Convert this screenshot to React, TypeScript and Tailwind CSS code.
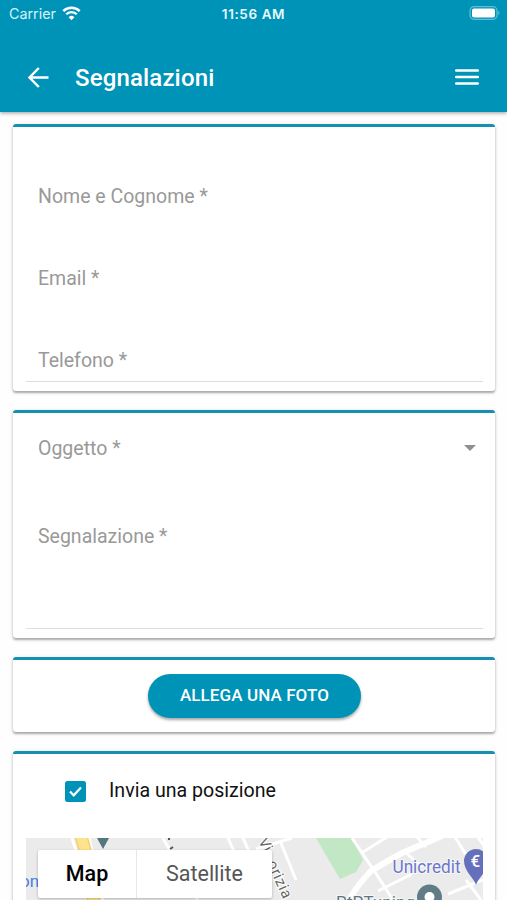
import { ReactNode } from "react";

interface CardProps {
  children: ReactNode;
  className?: string;
}

function Card({ children, className = "" }: CardProps) {
  return (
    <section
      className={`shrink-0 rounded-[3px] border-t-[3px] border-[#1590b0] bg-white pl-[13px] pr-3 shadow-[0_2px_2px_rgba(0,0,0,0.26),0_1px_4px_rgba(0,0,0,0.16)] ${className}`}
    >
      {children}
    </section>
  );
}

function Label({ children }: { children: ReactNode }) {
  return (
    <span className="text-[19.5px] leading-6 text-[#999999]">{children}</span>
  );
}

function StatusBar() {
  return (
    <div className="grid h-7 grid-cols-3 items-center pl-[9px] pr-[7px] font-['Inter','Liberation_Sans',sans-serif]">
      <div className="flex items-center gap-[6px] text-[14.3px] text-[#d5f3fa]">
        <span>Carrier</span>
        <svg width="19" height="15" viewBox="0 0 19 15" fill="none" className="-mt-0.5">
          <path d="M1.3 5.2a11.7 11.7 0 0 1 16.4 0" stroke="white" strokeWidth="2.5" />
          <path d="M4.2 8.3a7.5 7.5 0 0 1 10.6 0" stroke="white" strokeWidth="2.3" />
          <path d="M9.5 14.2 6.6 11.2a4.1 4.1 0 0 1 5.8 0Z" fill="white" />
        </svg>
      </div>
      <span className="-ml-0.5 whitespace-nowrap text-center text-[13.5px] font-semibold tracking-[0.6px] text-[#e6f9fd]">
        11:56 AM
      </span>
      <svg className="-mt-0.5 justify-self-end" width="31" height="14" viewBox="0 0 31 14">
        <rect x="1" y="0.7" width="27" height="12.6" rx="4" fill="none" stroke="#62bed5" strokeWidth="1.2" />
        <rect x="3" y="2.5" width="23" height="9" rx="2" fill="white" />
        <path d="M29.2 5a2.2 2.2 0 0 1 0 4Z" fill="#62bed5" />
      </svg>
    </div>
  );
}

// Mappa con i controlli Map / Satellite
function Mappa() {
  return (
    <div className="relative h-[62px] overflow-hidden bg-[#ebebeb]">
      <svg width="457" height="62" viewBox="26 838 457 62" className="block">
        <path d="M316 838h36l11 22-7 12-16 7Z" fill="#c1e7c4" />
        <g fill="none" stroke="white" strokeWidth="3">
          <path d="M72 838l20 62M89 838l14 62" />
          <path d="M163 838l10 18M228 838l8 18M243 838l8 18M190 890l8 10" />
          <path d="M256 849l36-11M281 843l15 37" />
          <path d="M352 838l23 34 18 28M363 852l24-15" />
          <path d="M404 851l18 16M417 837l9 10M455 837l20 32M478 837l10 15" />
          <path d="M378 891l34-17M448 894l35-14M466 880l15 20" />
        </g>
        <path d="M349 900q9-16 22-29 20-12 31-18l40-17" fill="none" stroke="white" strokeWidth="6" />
        <path d="M81 836l4 14 9 52" fill="none" stroke="#f3d16f" strokeWidth="13" />
        <path d="M81 836l4 14 9 52" fill="none" stroke="#ffe38c" strokeWidth="10" />
        <path d="M97 838h12l-6 11Z" fill="#55757f" />
        <path d="M169 838v2M170 849l3-2" stroke="#555555" strokeWidth="2" />
        <g fontFamily="Roboto, sans-serif">
          <text x="20" y="887" fontSize="17" fill="#4a80e4">on</text>
          <g fill="#666666" stroke="white" strokeWidth="2" paintOrder="stroke" fontSize="15">
            <text transform="translate(258 841) rotate(62)">Vi</text>
            <text transform="translate(267 863) rotate(66)" textLength="40">orizia</text>
          </g>
          <g stroke="#f7f7f7" strokeWidth="2" paintOrder="stroke">
            <text x="392.5" y="873" fontSize="18" textLength="68" lengthAdjust="spacingAndGlyphs" fill="#6b76cb">Unicredit</text>
            <text x="336" y="908" fontSize="17" textLength="79" fill="#607780">PtPTuning</text>
          </g>
          <path d="M476 885c-2-7-12-14-12-24a12 12 0 0 1 24 0c0 10-10 17-12 24Z" fill="#6570bd" />
          <text x="470.5" y="867" fontSize="17" fontWeight="500" fill="white">€</text>
        </g>
        <circle cx="429.5" cy="897" r="12.5" fill="#607d87" />
        <circle cx="429.5" cy="897" r="5" fill="white" />
      </svg>
      <div className="absolute left-3 top-3 flex h-12 w-[234px] rounded-[2px] bg-white text-[21.5px] shadow-[0_1px_3px_rgba(0,0,0,0.25)]">
        <button className="w-[99px] border-r border-[#e8e8e8] pt-px font-medium text-black">
          Map
        </button>
        <button className="flex-1 pt-px text-[#565656]">Satellite</button>
      </div>
    </div>
  );
}

export default function App() {
  return (
    <div className="flex h-[900px] w-[507px] flex-col overflow-hidden bg-[#fefefe] font-['Roboto',sans-serif]">
      <header className="h-28 shrink-0 bg-[#0093b8] text-white shadow-[0_1px_4px_rgba(0,0,0,0.4)]">
        <StatusBar />
        <div className="flex h-[100px] items-center px-[28px]">
          <svg width="21" height="21" viewBox="0 0 21 21" fill="none" className="-mt-px">
            <path d="M20.5 10.5H2M10.8 1 1.5 10.5l9.3 9.5" stroke="white" strokeWidth="2.5" />
          </svg>
          <h1 className="ml-[26px] flex-1 text-[24px] font-medium tracking-[0.15px]">
            Segnalazioni
          </h1>
          <svg width="24" height="18" viewBox="0 0 24 18" className="-mt-0.5">
            <path d="M1.2 2.5h21.6M1.2 9h21.6M1.2 15.5h21.6" stroke="white" strokeWidth="2.6" strokeLinecap="round" />
          </svg>
        </div>
      </header>

      <main className="flex flex-col gap-[19px] pl-[13px] pr-3 pt-3">
        <Card className="h-[267px] pt-[6px]">
          <div className="flex h-[82px] items-end pb-[6px] pl-3">
            <Label>Nome e Cognome *</Label>
          </div>
          <div className="flex h-[82px] items-end pb-[6px] pl-3">
            <Label>Email *</Label>
          </div>
          <div className="flex h-[85px] items-end border-b border-[#dedede] pb-2 pl-3">
            <Label>Telefono *</Label>
          </div>
        </Card>

        <Card className="h-[228px]">
          <div className="flex h-[72px] items-center justify-between pl-3 pr-[7px]">
            <Label>Oggetto *</Label>
            <svg width="12" height="6" viewBox="0 0 12 6" className="-mt-0.5">
              <path d="M0 0h12L6 6Z" fill="#909090" />
            </svg>
          </div>
          <div className="h-[144px] border-b border-[#dedede] pl-3 pt-10">
            <Label>Segnalazione *</Label>
          </div>
        </Card>

        <Card className="flex h-[75px] items-center justify-center">
          <button className="h-11 w-[213px] rounded-full bg-[#0093b8] text-[17px] font-medium tracking-[0.1px] text-white shadow-[0_2px_3px_rgba(0,0,0,0.35)]">
            ALLEGA UNA FOTO
          </button>
        </Card>

        <Card className="h-[170px]">
          <label className="flex h-[84px] items-center pb-[10px] pl-[39px]">
            <svg width="21" height="21" viewBox="0 0 21 21" fill="none">
              <rect width="21" height="21" rx="2.5" fill="#0093b8" />
              <path d="m5 10.5 3.7 3.8L16 6.5" stroke="white" strokeWidth="2.2" />
            </svg>
            <span className="ml-[23px] text-[19.6px] text-[#111111]">
              Invia una posizione
            </span>
          </label>
          <Mappa />
        </Card>
      </main>
    </div>
  );
}
